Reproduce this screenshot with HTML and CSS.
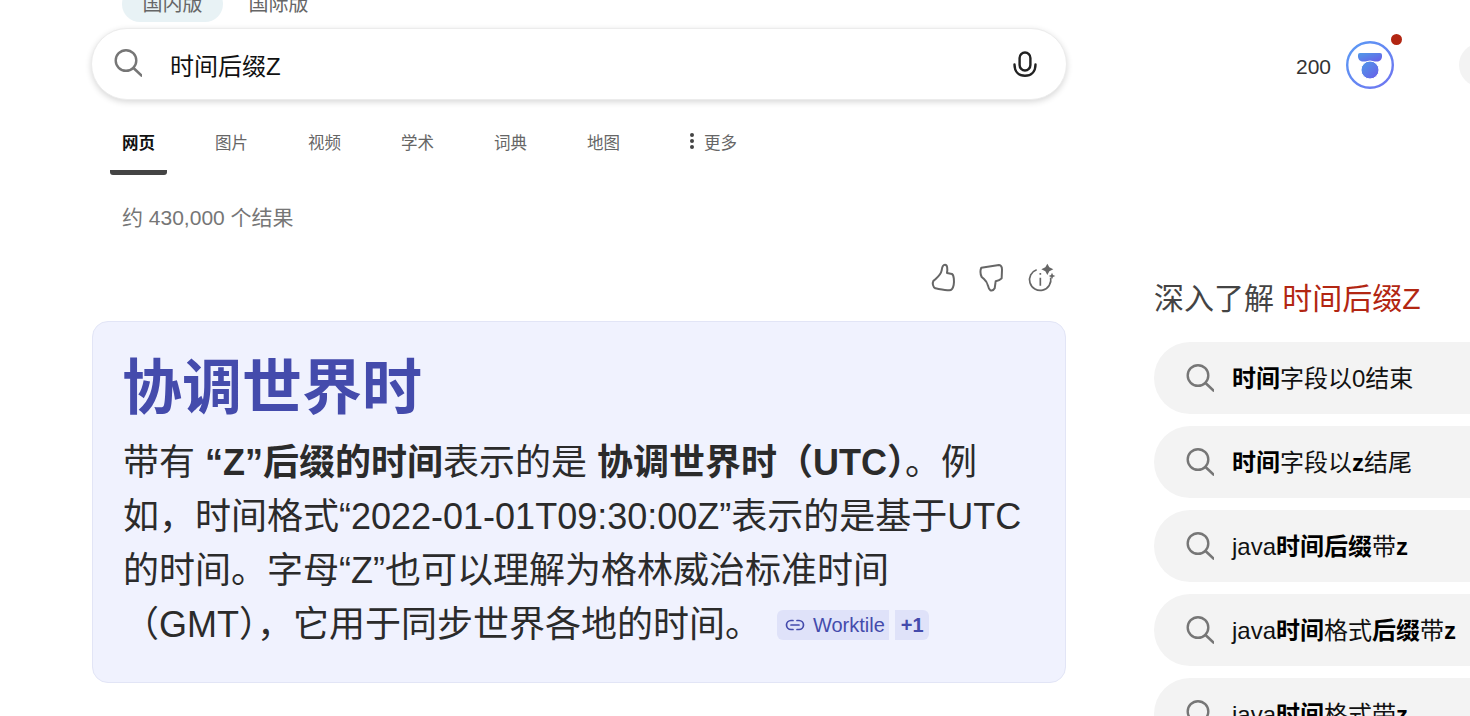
FILE: index.html
```html
<!DOCTYPE html>
<html lang="zh-CN">
<head>
<meta charset="utf-8">
<title>时间后缀Z</title>
<link rel="stylesheet" href="styles.css">
</head>
<body>
<svg class="defs" width="0" height="0" aria-hidden="true">
  <symbol id="search" viewBox="0 0 28 28"><circle cx="12" cy="11.5" r="10.3" fill="none" stroke="currentColor" stroke-width="2.4"/><path d="M19.5 19 27.5 26.5" fill="none" stroke="currentColor" stroke-width="2.6" stroke-linecap="round"/></symbol>
  <linearGradient id="badgeRing" x1="0" y1="0" x2="1" y2="1"><stop offset="0" stop-color="#5a9bf5"/><stop offset="1" stop-color="#6f74f0"/></linearGradient>
  <linearGradient id="badgeFill" x1="0" y1="0" x2="1" y2="1"><stop offset="0" stop-color="#4f9ae8"/><stop offset="1" stop-color="#6a5ce8"/></linearGradient>
</svg>

<div class="region-tabs">
  <span class="region active">国内版</span>
  <span class="region">国际版</span>
</div>

<header class="header">
  <div class="searchbox">
    <svg class="search-icon" width="28" height="28"><use href="#search"/></svg>
    <span class="query">时间后缀Z</span>
    <svg class="mic" width="24" height="28" viewBox="0 0 24 28" fill="none" stroke="#222" stroke-width="2.4" stroke-linecap="round">
      <rect x="6.6" y="1.5" width="10.8" height="18" rx="5.4"/>
      <path d="M1.5 13.5C1.5 21 6 24.8 12 24.8S22.500 21 22.500 13.500"/>
    </svg>
  </div>
  <div class="user">
    <span class="points">200</span>
    <span class="badge">
      <svg width="48" height="48" viewBox="0 0 48 48">
        <circle cx="24" cy="24" r="22.800" fill="#fff" stroke="url(#badgeRing)" stroke-width="2.400"/>
        <path d="M12 14q0-2 2-2h20q2 0 2 2v1.500c0 3-2.500 5-5 5H17c-2.500 0-5-2-5-5z" fill="url(#badgeFill)"/>
        <circle cx="24" cy="29" r="9" fill="url(#badgeFill)" stroke="#fff" stroke-width="1"/>
      </svg>
      <span class="dot"></span>
    </span>
    <span class="avatar"></span>
  </div>
</header>

<nav class="scopes">
  <a class="scope current">网页</a>
  <a class="scope">图片</a>
  <a class="scope">视频</a>
  <a class="scope">学术</a>
  <a class="scope">词典</a>
  <a class="scope">地图</a>
  <a class="scope more"><span class="dots"><i></i><i></i><i></i></span>更多</a>
</nav>

<div class="content">
  <main class="results">
    <p class="count">约 430,000 个结果</p>
    <div class="feedback">
      <svg width="25" height="30" viewBox="45 40 75 90" fill="none" stroke="#666" stroke-width="6" stroke-linejoin="round"><path d="M58 116C50 112 49 100 52 94 60 86 74 78 77 62 78 52 80 45 87 45 94 45 95 56 93 70L108 73C114 76 115 96 113 106 111 116 107 122 100 122 86 122 70 118 58 116Z"/></svg>
      <svg width="25" height="30" viewBox="190 38 75 90" fill="none" stroke="#666" stroke-width="6" stroke-linejoin="round"><path d="M197 52 250 44Q259 45 259 58L258 84Q252 90 240 93L237 114Q232 123 224 120 219 116 217 106 214 94 205 86L198 80Q193 70 195 58Z"/></svg>
      <svg width="30" height="30" viewBox="335 40 90 90"><path d="M406 84A32 32 0 1 1 364 60" fill="none" stroke="#666" stroke-width="5"/><path d="M375 70v5M375 84v24" stroke="#666" stroke-width="5"/><path d="M396 42 402 53 414 59 402 65 396 76 390 65 378 59 390 53ZM410 69 413 76 420 79 413 82 410 89 407 82 400 79 407 76Z" fill="#666"/></svg>
    </div>
    <article class="answer">
      <h1 class="answer-title">协调世界时</h1>
      <p class="answer-text">带有 <b>“Z”后缀的时间</b>表示的是 <b>协调世界时（UTC）</b>。例如，时间格式“2022-01-01T09:30:00Z”表示的是基于UTC的时间。字母“Z”也可以理解为格林威治标准时间（GMT），它用于同步世界各地的时间。<span class="cites"><span class="cite"><svg width="20" height="12" viewBox="0 0 20 12" fill="none" stroke="#444bac" stroke-width="1.700" stroke-linecap="round"><path d="M8 1.500H6A4.500 4.500 0 0 0 6 10.500H8M12 1.500H14A4.500 4.500 0 0 1 14 10.500H12M6 6H14"/></svg>Worktile</span><span class="cite more-cites">+1</span></span></p>
    </article>
  </main>
  <aside class="related">
    <h2 class="related-title">深入了解 <em>时间后缀Z</em></h2>
    <ul class="related-list">
      <li class="pill"><svg width="28" height="28"><use href="#search"/></svg><span><b>时间</b>字段以0结束</span></li>
      <li class="pill"><svg width="28" height="28"><use href="#search"/></svg><span><b>时间</b>字段以<b>z</b>结尾</span></li>
      <li class="pill"><svg width="28" height="28"><use href="#search"/></svg><span>java<b>时间后缀</b>带<b>z</b></span></li>
      <li class="pill"><svg width="28" height="28"><use href="#search"/></svg><span>java<b>时间</b>格式<b>后缀</b>带<b>z</b></span></li>
      <li class="pill"><svg width="28" height="28"><use href="#search"/></svg><span>java<b>时间</b>格式带<b>z</b></span></li>
    </ul>
  </aside>
</div>
</body>
</html>
```

FILE: styles.css
```css
* { box-sizing: border-box; }
html, body {
  margin: 0;
  width: 1470px;
  height: 716px;
  overflow: hidden;
  background: #fff;
}
body {
  font-family: "Liberation Sans", "Noto Sans CJK SC", sans-serif;
  color: #2b2b2b;
}
.defs { display: block; height: 0; }

.region-tabs {
  display: flex;
  height: 36px;
  margin: -14px 0 6px 122px;
  gap: 5px;
}
.region {
  width: 101px;
  height: 36px;
  border-radius: 18px;
  font-size: 20px;
  line-height: 36px;
  text-align: center;
  color: #666;
}
.region.active { background: #e8f2f5; }

.header {
  display: flex;
  align-items: center;
  margin-left: 91px;
  height: 72px;
}
.searchbox {
  display: flex;
  align-items: center;
  flex: none;
  width: 976px;
  height: 72px;
  padding: 0 29px 0 22px;
  border-radius: 36px;
  background: #fff;
  border: 1px solid #ececec;
  box-shadow: 0 2px 6px rgba(0, 0, 0, .16);
}
.search-icon { color: #767676; margin-top: -2px; flex: none; }
.query {
  flex: 1;
  margin-left: 28px;
  font-size: 24px;
  color: #111;
}
.mic { margin-top: 2px; }
.user {
  display: flex;
  align-items: center;
  flex: none;
  margin-left: 229px;
  padding-top: 2px;
  font-size: 21px;
  color: #333;
}
.points { margin-top: 4px; }
.badge { position: relative; display: flex; margin-left: 15px; }
.dot {
  position: absolute;
  top: -7px;
  right: -8px;
  width: 11px;
  height: 11px;
  border-radius: 50%;
  background: #b22612;
}
.avatar {
  width: 44px;
  height: 44px;
  margin-left: 65px;
  border-radius: 50%;
  background: #f3f3f3;
  flex: none;
}

.scopes {
  display: flex;
  margin: 24px 0 0 110px;
  height: 51px;
}
.scope {
  padding: 8px 12px 0;
  margin-right: 36px;
  font-size: 16.5px;
  line-height: 22px;
  color: #666;
  width: 57px;
  white-space: nowrap;
}
.scope.current {
  color: #111;
  font-weight: bold;
  border-bottom: 5px solid #444;
  border-radius: 0 0 3px 3px;
}
.scope.more {
  display: flex;
  padding-left: 0;
  margin-left: 22px;
}
.dots {
  display: flex;
  flex-direction: column;
  gap: 2px;
  margin: 1px 10px 0 0;
}
.dots i {
  width: 4px;
  height: 4px;
  border-radius: 50%;
  background: #444;
}

.content { display: flex; }
.results {
  width: 974px;
  margin-left: 92px;
  flex: none;
}
.count {
  margin: 29px 0 0 30px;
  font-size: 21px;
  line-height: 28px;
  color: #767676;
}
.feedback {
  display: flex;
  justify-content: flex-end;
  gap: 23px;
  margin-top: 31px;
  padding-right: 9px;
  height: 30px;
}
.answer {
  margin-top: 28px;
  height: 362px;
  padding: 19px 32px 0 30px;
  background: #f0f2fe;
  border: 1px solid #e2e5f6;
  border-radius: 16px;
}
.answer-title {
  margin: 0 0 0 -1px;
  font-size: 60px;
  line-height: 95px;
  font-weight: bold;
  color: #444bac;
}
.answer-text {
  margin: 0;
  font-size: 36px;
  line-height: 54px;
  color: #2b2b2b;
}
.cites {
  display: inline-flex;
  gap: 6px;
  margin-left: 16px;
  vertical-align: 6px;
}
.cite {
  display: inline-flex;
  align-items: center;
  gap: 8px;
  height: 30px;
  padding: 0 4px 0 8px;
  background: #dfe2f9;
  border-radius: 6px 0 0 6px;
  font-size: 20px;
  line-height: 30px;
  color: #444bac;
}
.more-cites {
  padding: 0 6px 0 6px;
  width: 34px;
  font-weight: bold;
  border-radius: 0 6px 6px 0;
}

.related {
  margin-left: 88px;
  width: 400px;
  flex: none;
}
.related-title {
  margin: 103px 0 0;
  font-size: 30px;
  line-height: 42px;
  font-weight: normal;
  color: #444;
}
.related-title em { font-style: normal; color: #b22612; }
.related-list {
  list-style: none;
  margin: 22px 0 0;
  padding: 0;
  display: flex;
  flex-direction: column;
  gap: 12px;
}
.pill {
  display: flex;
  align-items: center;
  gap: 18px;
  height: 72px;
  padding-left: 32px;
  border-radius: 36px;
  background: #f3f3f3;
  font-size: 24px;
  color: #111;
  flex: none;
}
.pill svg { color: #767676; flex: none; }
.pill span { margin-top: -4px; }
.pill b { color: #000; }
```
